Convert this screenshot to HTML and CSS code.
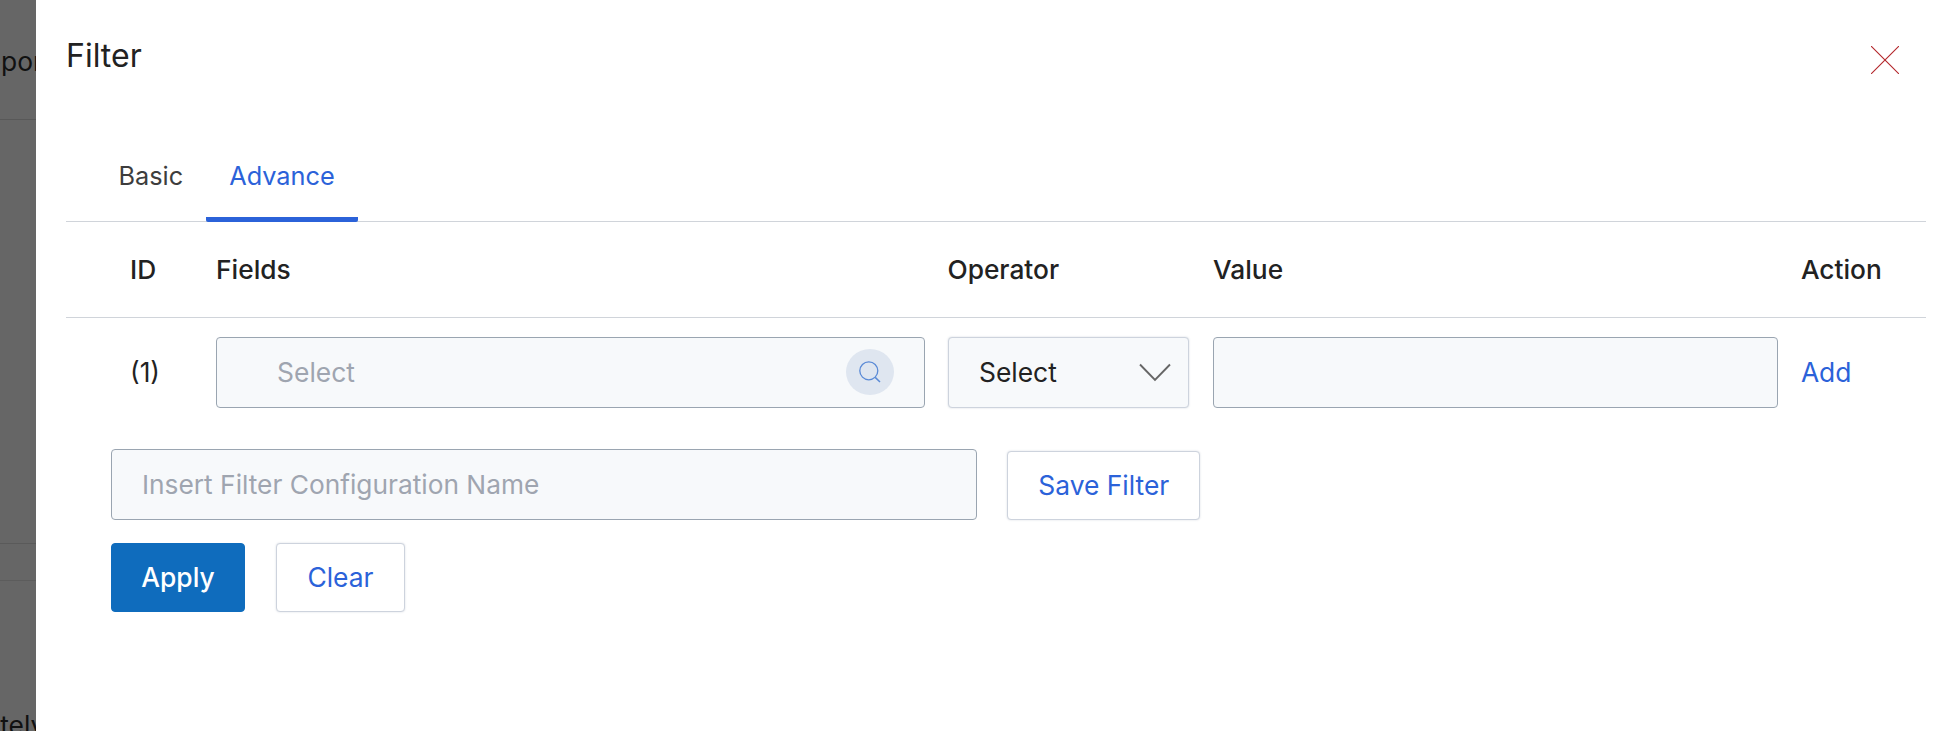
FILE: index.html
```html
<!DOCTYPE html>
<html lang="en">
<head>
<meta charset="utf-8">
<title>Filter</title>
<link rel="stylesheet" href="styles.css">
</head>
<body>
<div class="page">
  <div class="page-head"><span class="clip clip-top">Report</span></div>
  <div class="page-body"></div>
  <div class="page-bar"></div>
  <div class="page-foot"><span class="clip clip-bottom">Completely</span></div>
</div>
<section class="modal">
  <header class="modal-head">
    <h1 class="modal-title">Filter</h1>
    <button class="close" type="button" aria-label="Close">
      <svg width="28" height="28" viewBox="0 0 28 28"><path d="M0 0 28 28M28 0 0 28" fill="none" stroke="#b3262b" stroke-width="1.1"/></svg>
    </button>
  </header>
  <nav class="tabs">
    <a class="tab">Basic</a>
    <a class="tab tab-active">Advance</a>
  </nav>
  <div class="grid grid-head">
    <div class="cell-id">ID</div>
    <div>Fields</div>
    <div class="cell-op">Operator</div>
    <div>Value</div>
    <div class="cell-action">Action</div>
  </div>
  <div class="grid grid-row">
    <div class="cell-id cell-num">(1)</div>
    <div class="field field-search">
      <span class="placeholder">Select</span>
      <span class="search-btn">
        <svg width="24" height="24" viewBox="0 0 24 24"><circle cx="10.8" cy="10.8" r="9" fill="none" stroke="#5a8ad6" stroke-width="1.3"/><path d="M17.2 17.4 22 22" fill="none" stroke="#5a8ad6" stroke-width="1.5"/></svg>
      </span>
    </div>
    <div class="field field-select">
      <span>Select</span>
      <svg width="32" height="19" viewBox="0 0 32 19"><path d="M1 1.5 16 17 31 1.5" fill="none" stroke="#666" stroke-width="1.9"/></svg>
    </div>
    <div class="field"></div>
    <a class="link cell-action">Add</a>
  </div>
  <div class="save-row">
    <div class="field field-name"><span class="placeholder">Insert Filter Configuration Name</span></div>
    <button class="btn btn-save" type="button">Save Filter</button>
  </div>
  <div class="actions">
    <button class="btn btn-primary" type="button">Apply</button>
    <button class="btn btn-clear" type="button">Clear</button>
  </div>
</section>
</body>
</html>
```
FILE: styles.css
```css
* { box-sizing: border-box; }
html, body { margin: 0; height: 731px; overflow: hidden; }
body {
  width: 1956px;
  background: #fff;
  font-family: Inter, "Liberation Sans", sans-serif;
  font-size: 26.4px;
  color: #222;
}
.page {
  width: 36px;
  height: 731px;
  overflow: hidden;
  background: #666;
  color: #111;
  white-space: nowrap;
}
.page-head { height: 120px; border-bottom: 1px solid #585858; padding-top: 46px; line-height: 30px; }
.page-body { height: 424px; border-bottom: 1px solid #5a5a5a; }
.page-bar { height: 37px; border-bottom: 1px solid #5c5c5c; }
.page-foot { height: 150px; padding-top: 129px; line-height: 30px; }
.clip { display: inline-block; }
.clip-top { margin-left: -31px; }
.clip-bottom { margin-left: -96px; }

.modal {
  position: absolute;
  left: 36px;
  top: 0;
  width: 1920px;
  height: 731px;
  background: #fff;
  padding: 0 30px;
}
.modal-head { display: flex; justify-content: space-between; align-items: flex-start; height: 132px; }
.modal-title { margin: 37px 0 0; font-size: 32px; font-weight: 400; line-height: 38px; color: #222; }
.close { margin: 46px 27px 0 0; padding: 0; border: 0; background: none; line-height: 0; }

.tabs { display: flex; height: 90px; padding-left: 29.5px; border-bottom: 1px solid #d0d4da; }
.tab { padding: 0 23px; height: 90px; line-height: 88px; font-size: 25.3px; color: #3d3d3d; }
.tab-active { color: #2b62d9; border-bottom: 5px solid #2b62d9; border-radius: 0 0 2px 2px; }

.grid {
  display: grid;
  grid-template-columns: 126.3px 708.6px 240.8px 565px 1fr;
  column-gap: 23.8px;
  width: 1860px;
  align-items: center;
}
.grid-head { height: 96px; border-bottom: 1px solid #d0d4da; font-size: 26.3px; font-weight: 450; padding-bottom: 1px; }
.grid-row { padding-top: 19px; }
.cell-id { padding-left: 64px; }
.cell-num { padding-left: 64px; }
.cell-op { margin-left: -1px; }
.cell-action { margin-left: -1px; }
.field {
  display: flex;
  align-items: center;
  height: 70.6px;
  background: #f7f9fb;
  border: 1.5px solid #9aa5b1;
  border-radius: 4px;
}
.placeholder { color: #9fa5b0; }
.field-search { justify-content: space-between; padding: 0 30px 0 60px; }
.search-btn {
  display: flex;
  align-items: center;
  justify-content: center;
  width: 48px;
  height: 46px;
  border-radius: 50%;
  background: #dfe6f0;
}
.field-select {
  justify-content: space-between;
  padding: 0 17px 0 29.5px;
  border-color: #cdd3dd;
  box-shadow: 0 0 2px rgba(120, 135, 160, .35);
}
.link { color: #2b62d9; }

.save-row { display: flex; align-items: flex-end; gap: 30.3px; margin: 41.7px 0 0 45px; }
.field-name { width: 865.7px; padding-left: 30px; font-size: 26.3px; }
.btn {
  font: inherit;
  height: 68.5px;
  border-radius: 4px;
  padding: 0 0 1px;
  background: #fff;
  border: 1.5px solid #cdd3dd;
  color: #2b62d9;
  box-shadow: 0 0 2px rgba(120, 135, 160, .3);
}
.btn-save { width: 193.5px; }
.actions { display: flex; gap: 31px; margin: 23.3px 0 0 45px; }
.btn-primary { width: 134px; background: #0f6cbd; border-color: #0f6cbd; color: #fff; font-weight: 500; box-shadow: none; }
.btn-clear { width: 129px; }
```
